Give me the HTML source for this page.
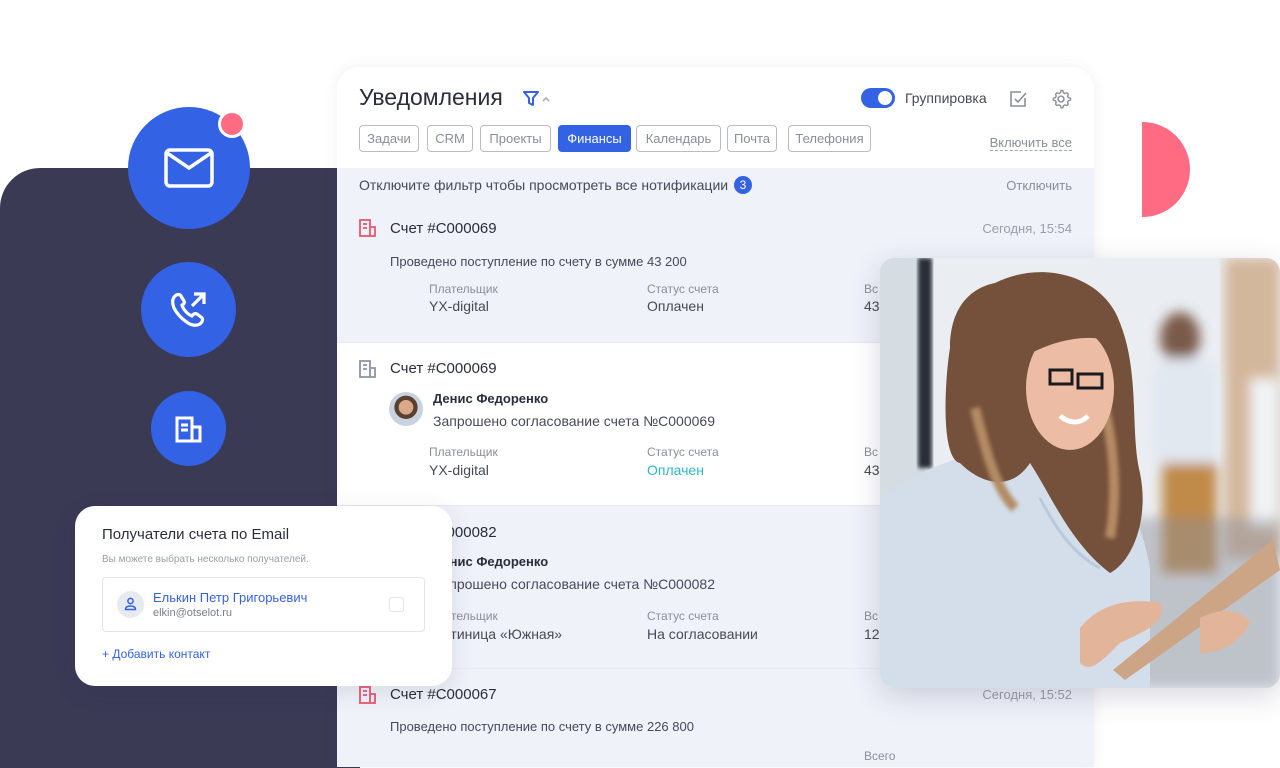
<!DOCTYPE html>
<html><head><meta charset="utf-8"><style>
*{box-sizing:border-box;margin:0;padding:0}
body{width:1280px;height:756px;overflow:hidden;background:#fff;font-family:"Liberation Sans",sans-serif;position:relative;color:#2b2d3a}
.abs{position:absolute}
.dark{left:0;top:168px;width:360px;height:600px;background:#3a3a55;border-top-left-radius:40px}
.circ{border-radius:50%;background:#3462e5;display:flex;align-items:center;justify-content:center}
.card{left:337px;top:67px;width:757px;height:700px;background:#fff;border-radius:22px 22px 0 0;box-shadow:0 0 14px rgba(60,70,110,.08);overflow:hidden}
.tab{position:absolute;top:58px;height:27px;border:1px solid #b9bcc4;border-radius:4px;font-size:13px;color:#8a8e98;line-height:25px;text-align:center}
.sec{position:absolute;left:0;width:757px}
.lbl{position:absolute;font-size:12px;color:#8a8e98}
.val{position:absolute;font-size:14px;color:#474a56}
.ttl{position:absolute;font-size:15px;color:#2b2d3a}
.txt{position:absolute;font-size:14px;color:#474a56}
.time{position:absolute;right:22px;font-size:13px;color:#9a9ea8}
</style></head><body>
<div class="abs dark"></div>
<div class="abs" style="left:1142px;top:122px;width:48px;height:95px;background:#fe6b83;border-radius:0 48px 48px 0"></div>

<div class="abs card">
  <div class="abs" style="left:22px;top:17px;font-size:23px;color:#2b2d3a">Уведомления</div>
  <svg class="abs" style="left:186px;top:23px" width="30" height="18" viewBox="0 0 30 18"><path d="M1 2h14l-5 6v7l-4-2V8z" fill="none" stroke="#3462e5" stroke-width="2" stroke-linejoin="round"/><path d="M20 11l3-3 3 3" fill="none" stroke="#9aa" stroke-width="1.5"/></svg>
  <div class="abs" style="left:524px;top:21px;width:34px;height:20px;border-radius:10px;background:#3462e5"><div class="abs" style="right:3px;top:3px;width:14px;height:14px;border-radius:50%;background:#fff"></div></div>
  <div class="abs" style="left:568px;top:23px;font-size:14px;color:#474a56">Группировка</div>
  <svg class="abs" style="left:672px;top:22px" width="20" height="20" viewBox="0 0 20 20"><path d="M16 9v8H2V3h10" fill="none" stroke="#8a8e98" stroke-width="1.6"/><path d="M6 10l3 3 8-9" fill="none" stroke="#8a8e98" stroke-width="1.6"/></svg>
  <svg class="abs" style="left:713px;top:21px" width="22" height="22" viewBox="0 0 24 24"><circle cx="12" cy="12" r="3.2" fill="none" stroke="#8a8e98" stroke-width="1.6"/><path d="M12 2.5l2 .3.6 2.3 1.6.9 2.3-.7 1.4 1.4-.7 2.3.9 1.6 2.3.6v2l-2.3.6-.9 1.6.7 2.3-1.4 1.4-2.3-.7-1.6.9-.6 2.3h-2l-.6-2.3-1.6-.9-2.3.7-1.4-1.4.7-2.3-.9-1.6-2.3-.6v-2l2.3-.6.9-1.6-.7-2.3 1.4-1.4 2.3.7 1.6-.9.6-2.3z" fill="none" stroke="#8a8e98" stroke-width="1.5" stroke-linejoin="round"/></svg>
  <div class="tab" style="left:22px;width:60px">Задачи</div>
  <div class="tab" style="left:90px;width:46px">CRM</div>
  <div class="tab" style="left:143px;width:71px">Проекты</div>
  <div class="tab" style="left:221px;width:73px;background:#3462e5;border-color:#3462e5;color:#fff">Финансы</div>
  <div class="tab" style="left:299px;width:85px">Календарь</div>
  <div class="tab" style="left:390px;width:50px">Почта</div>
  <div class="tab" style="left:451px;width:83px">Телефония</div>
  <div class="abs" style="right:22px;top:68px;font-size:13px;color:#8a8e98;border-bottom:1px dashed #9aa">Включить все</div>

  <div class="sec" style="top:101px;height:174px;background:#eff2f9">
    <div class="txt" style="left:22px;top:9px">Отключите фильтр чтобы просмотреть все нотификации</div>
    <div class="abs" style="left:397px;top:8px;width:18px;height:18px;border-radius:50%;background:#3462e5;color:#fff;font-size:12px;text-align:center;line-height:18px">3</div>
    <div class="abs" style="right:22px;top:10px;font-size:13px;color:#8a8e98">Отключить</div>
    <svg class="abs" style="left:22px;top:51px" width="17" height="18" viewBox="0 0 17 18"><path d="M1 1h10v16H1zM11 8h5v9h-5M4 5h4M4 9h4" fill="none" stroke="#e8566d" stroke-width="1.8"/></svg>
    <div class="ttl" style="left:53px;top:52px">Счет #С000069</div>
    <div class="time" style="top:53px">Сегодня, 15:54</div>
    <div class="txt" style="left:53px;top:86px;font-size:13px">Проведено поступление по счету в сумме 43 200</div>
    <div class="lbl" style="left:92px;top:114px">Плательщик</div><div class="val" style="left:92px;top:130px">YX-digital</div>
    <div class="lbl" style="left:310px;top:114px">Статус счета</div><div class="val" style="left:310px;top:130px">Оплачен</div>
    <div class="lbl" style="left:527px;top:114px">Вс</div><div class="val" style="left:527px;top:130px">43</div>
  </div>
  <div class="sec" style="top:275px;height:163px;background:#fff;border-top:1px solid #e6e9f0">
    <svg class="abs" style="left:22px;top:17px" width="17" height="18" viewBox="0 0 17 18"><path d="M1 1h10v16H1zM11 8h5v9h-5M4 5h4M4 9h4" fill="none" stroke="#8a93a6" stroke-width="1.8"/></svg>
    <div class="ttl" style="left:53px;top:17px">Счет #С000069</div>
    <div class="abs" style="left:52px;top:49px;width:34px;height:34px;border-radius:50%;background:radial-gradient(circle at 50% 45%,#d9a98a 0 28%,#5a4030 30% 45%,#c9d3e0 47%)"></div>
    <div class="abs" style="left:96px;top:48px;font-size:13px;font-weight:bold;color:#2b2d3a">Денис Федоренко</div>
    <div class="txt" style="left:96px;top:70px">Запрошено согласование счета №С000069</div>
    <div class="lbl" style="left:92px;top:102px">Плательщик</div><div class="val" style="left:92px;top:119px">YX-digital</div>
    <div class="lbl" style="left:310px;top:102px">Статус счета</div><div class="val" style="left:310px;top:119px;color:#2bb8c9">Оплачен</div>
    <div class="lbl" style="left:527px;top:102px">Вс</div><div class="val" style="left:527px;top:119px">43</div>
  </div>
  <div class="sec" style="top:438px;height:163px;background:#eff2f9;border-top:1px solid #e6e9f0">
    <div class="ttl" style="left:53px;top:18px">Счет #С000082</div>
    <div class="abs" style="left:96px;top:48px;font-size:13px;font-weight:bold;color:#2b2d3a">Денис Федоренко</div>
    <div class="txt" style="left:96px;top:70px">Запрошено согласование счета №С000082</div>
    <div class="lbl" style="left:92px;top:103px">Плательщик</div><div class="val" style="left:92px;top:120px">Гостиница «Южная»</div>
    <div class="lbl" style="left:310px;top:103px">Статус счета</div><div class="val" style="left:310px;top:120px">На согласовании</div>
    <div class="lbl" style="left:527px;top:103px">Вс</div><div class="val" style="left:527px;top:120px">12</div>
  </div>
  <div class="sec" style="top:601px;height:120px;background:#eff2f9;border-top:1px solid #e6e9f0">
    <svg class="abs" style="left:22px;top:17px" width="17" height="18" viewBox="0 0 17 18"><path d="M1 1h10v16H1zM11 8h5v9h-5M4 5h4M4 9h4" fill="none" stroke="#e8566d" stroke-width="1.8"/></svg>
    <div class="ttl" style="left:53px;top:17px">Счет #С000067</div>
    <div class="time" style="top:18px">Сегодня, 15:52</div>
    <div class="txt" style="left:53px;top:50px;font-size:13px">Проведено поступление по счету в сумме 226 800</div>
    <div class="lbl" style="left:527px;top:80px">Всего</div>
  </div>
</div>

<div class="abs circ" style="left:128px;top:107px;width:122px;height:122px">
  <svg width="50" height="40" viewBox="0 0 50 40"><rect x="2" y="2" width="46" height="36" rx="4" fill="none" stroke="#fff" stroke-width="3.5"/><path d="M3 5l22 15 22-15" fill="none" stroke="#fff" stroke-width="3.5"/></svg>
</div>
<div class="abs" style="left:218px;top:110px;width:28px;height:28px;border-radius:50%;background:#fe6b83;border:3px solid #fff"></div>
<div class="abs circ" style="left:141px;top:262px;width:95px;height:95px">
  <svg width="38" height="36" viewBox="0 0 38 36"><path d="M5 4c2-2 5-2 6 0l3 5c1 2 0 3-2 4 1 4 5 9 10 11 1-2 3-3 5-2l4 3c2 1 2 4 0 6-3 3-8 3-13 0-6-4-11-9-14-15-2-5-2-9 1-12z" fill="none" stroke="#fff" stroke-width="3.2" stroke-linejoin="round"/><path d="M22 14l12-12M24 2h10v10" fill="none" stroke="#fff" stroke-width="3.2"/></svg>
</div>
<div class="abs circ" style="left:151px;top:391px;width:75px;height:75px">
  <svg width="28" height="28" viewBox="0 0 28 28"><path d="M2 3h15v23H2zM17 12h8v14h-8M6 10h7M6 15h7" fill="none" stroke="#fff" stroke-width="3"/></svg>
</div>

<div class="abs" style="left:75px;top:506px;width:377px;height:180px;background:#fff;border-radius:20px;box-shadow:0 6px 24px rgba(40,40,80,.12)">
  <div class="abs" style="left:27px;top:20px;font-size:15px;color:#2b2d3a">Получатели счета по Email</div>
  <div class="abs" style="left:27px;top:48px;font-size:10px;color:#9a9ea8">Вы можете выбрать несколько получателей.</div>
  <div class="abs" style="left:27px;top:71px;width:323px;height:55px;border:1px solid #e3e5ea;border-radius:4px">
    <div class="abs" style="left:14px;top:13px;width:27px;height:27px;border-radius:50%;background:#e7eaf1"></div>
    <svg class="abs" style="left:21px;top:19px" width="13" height="14" viewBox="0 0 13 14"><circle cx="6.5" cy="4" r="2.6" fill="none" stroke="#3462e5" stroke-width="1.5"/><path d="M1.5 12.5c0-2.5 2-3.5 5-3.5s5 1 5 3.5z" fill="none" stroke="#3462e5" stroke-width="1.5"/></svg>
    <div class="abs" style="left:50px;top:12px;font-size:13px;color:#3462e5">Елькин Петр Григорьевич</div>
    <div class="abs" style="left:50px;top:29px;font-size:11px;color:#7a7e88">elkin@otselot.ru</div>
    <div class="abs" style="left:286px;top:19px;width:15px;height:15px;border:1px solid #e3e5ea;border-radius:3px"></div>
  </div>
  <div class="abs" style="left:27px;top:141px;font-size:12px;color:#3462e5">+ Добавить контакт</div>
</div>

<div class="abs" style="left:880px;top:258px;width:400px;height:430px;border-radius:14px;overflow:hidden;box-shadow:0 8px 30px rgba(40,40,80,.18)">
<svg width="400" height="430" viewBox="0 0 400 430">
<defs><filter id="b"><feGaussianBlur stdDeviation="6"/></filter><filter id="s"><feGaussianBlur stdDeviation="2"/></filter></defs>
<rect width="400" height="430" fill="#eaeef2"/>
<rect x="0" y="0" width="45" height="240" fill="#d5dde3"/>
<rect x="38" y="0" width="14" height="210" fill="#2a2f38" filter="url(#s)"/>
<rect x="345" y="0" width="55" height="300" fill="#d3b79c" filter="url(#b)"/>
<g filter="url(#b)"><ellipse cx="300" cy="80" rx="20" ry="26" fill="#7a5a48"/><rect x="272" y="100" width="66" height="110" rx="20" fill="#e2e8f0"/><rect x="282" y="205" width="55" height="110" fill="#c08a4a"/><rect x="370" y="120" width="30" height="150" fill="#f0f3f6"/><rect x="250" y="260" width="150" height="170" fill="#8a8f98" opacity=".45"/></g>
<path d="M0 240c40-30 80-40 110-50h80c40 20 70 60 80 120v120H0z" fill="#d3deea"/>
<path d="M115 25c50-25 110-5 125 40 20 50 10 110 20 150 10 50-10 90-30 100-40-30-60-80-80-110-20 30-50 20-70 0C60 200 65 120 70 90c0-40 20-60 45-65z" fill="#75503a"/>
<path d="M95 150c10 40 20 80 40 100M220 130c10 40 20 90 10 150" stroke="#b48b63" stroke-width="10" fill="none" filter="url(#s)"/>
<ellipse cx="190" cy="130" rx="44" ry="62" fill="#ecbca4"/>
<path d="M148 80c20-25 65-28 88 5-22-10-58-5-88 12z" fill="#75503a"/>
<path d="M170 112h22v14h-22zM198 116h24v14h-24z" fill="none" stroke="#1a1a1f" stroke-width="3"/>
<path d="M180 158c10 8 20 8 28 0" stroke="#fff" stroke-width="5" fill="none"/>
<path d="M160 240c20 40 40 60 60 70" stroke="#b9c9dc" stroke-width="3" fill="none"/>
<path d="M233 412l160-130 7 30-155 110z" fill="#ccA486"/>
<path d="M200 370c20-25 50-30 80-25 10 20-20 30-40 40-20 20-30 30-40 20z" fill="#e2b49a"/>
<path d="M320 360c20-10 40-10 50 5-10 20-30 30-50 30z" fill="#e2b49a"/>
</svg>
</div>
</body></html>
